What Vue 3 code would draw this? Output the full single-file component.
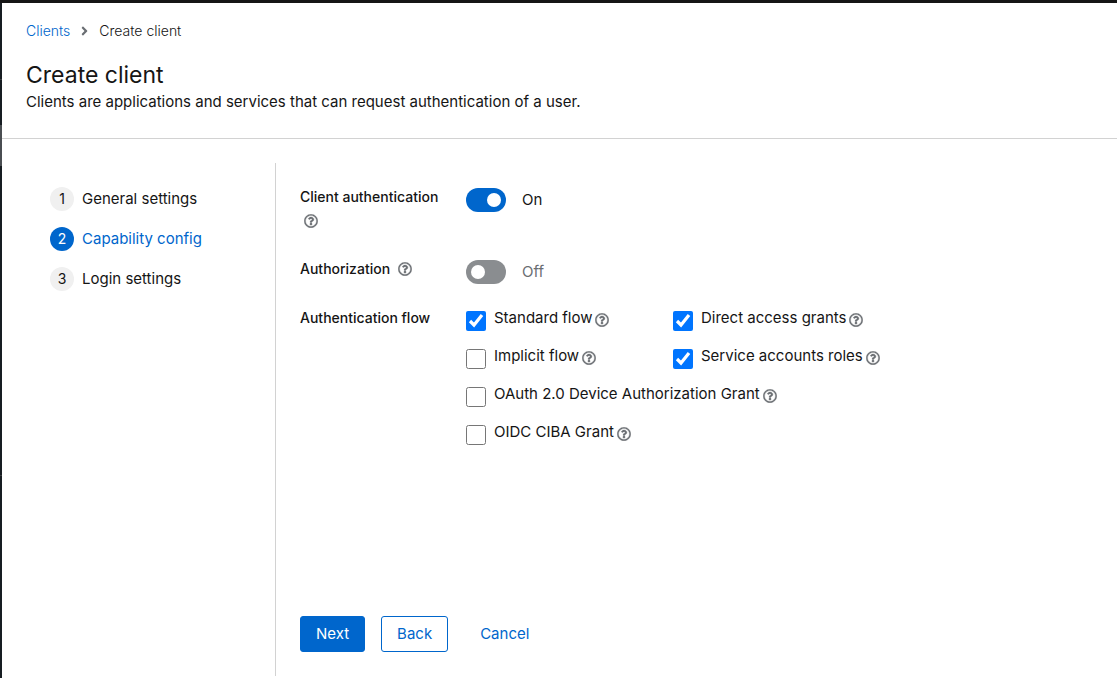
<script setup>
import { ref, h } from 'vue'

const steps = ['General settings', 'Capability config', 'Login settings']
const current = ref(1)
const clientAuth = ref(true)
const authorization = ref(false)
const flows = ref([
  { id: 'standard', label: 'Standard flow', on: true },
  { id: 'direct', label: 'Direct access grants', on: true },
  { id: 'implicit', label: 'Implicit flow', on: false },
  { id: 'service', label: 'Service accounts roles', on: true },
  { id: 'device', label: 'OAuth 2.0 Device Authorization Grant', on: false, wide: true },
  { id: 'ciba', label: 'OIDC CIBA Grant', on: false, wide: true },
])

const helpPath =
  'M256 8C119.043 8 8 119.083 8 256c0 136.997 111.043 248 248 248s248-111.003 248-248C504 119.083 392.957 8 256 8zm0 448c-110.532 0-200-89.431-200-200 0-110.495 89.472-200 200-200 110.491 0 200 89.471 200 200 0 110.53-89.431 200-200 200zm107.244-255.2c0 67.052-72.421 68.084-72.421 92.863V300c0 6.627-5.373 12-12 12h-45.647c-6.627 0-12-5.373-12-12v-8.659c0-35.745 27.1-50.034 47.579-61.516 17.561-9.845 28.324-16.541 28.324-29.579 0-17.246-21.999-28.693-39.784-28.693-23.189 0-33.894 10.977-48.942 29.969-4.057 5.12-11.46 6.071-16.666 2.124l-27.824-21.098c-5.107-3.872-6.251-11.066-2.644-16.363C184.846 131.491 214.94 112 261.794 112c49.071 0 101.45 38.304 101.45 88.8zM298 368c0 23.159-18.841 42-42 42s-42-18.841-42-42 18.841-42 42-42 42 18.841 42 42z'

const HelpIcon = () =>
  h('svg', {
    viewBox: '0 0 512 512',
    width: 14,
    height: 14,
    fill: 'currentColor',
    stroke: 'currentColor',
    'stroke-width': 12,
    'aria-hidden': 'true',
  }, [h('path', { d: helpPath })])
</script>

<template>
  <div class="shell">
    <div class="rail" aria-hidden="true">
      <span class="rail-brand"></span>
      <span class="rail-group"></span>
      <span class="rail-active"></span>
      <span class="rail-list"></span>
      <span class="rail-rest"></span>
    </div>
    <main class="page">
      <header class="head">
        <nav class="crumbs" aria-label="Breadcrumb">
          <a href="#clients">Clients</a>
          <svg viewBox="0 0 256 512" width="7" height="14" fill="#6a6e73" aria-hidden="true">
            <path d="M224.3 273l-136 136c-9.4 9.4-24.6 9.4-33.9 0l-22.6-22.6c-9.4-9.4-9.4-24.6 0-33.9l96.4-96.4-96.4-96.4c-9.4-9.4-9.4-24.6 0-33.9L54.3 103c9.4-9.4 24.6-9.4 33.9 0l136 136c9.5 9.4 9.5 24.6.1 34z" />
          </svg>
          <span>Create client</span>
        </nav>
        <h1>Create client</h1>
        <p>Clients are applications and services that can request authentication of a user.</p>
      </header>

      <div class="wizard">
        <nav class="steps" aria-label="Steps">
          <button
            v-for="(s, i) in steps"
            :key="s"
            type="button"
            class="step"
            :class="{ current: i === current }"
            @click="current = i"
          >
            <span class="num">{{ i + 1 }}</span>
            <span>{{ s }}</span>
          </button>
        </nav>

        <form class="content" @submit.prevent>
          <div class="fields">
            <div class="label">
              <label for="client-auth">Client authentication</label>
              <button type="button" class="help" aria-label="Help for client authentication"><HelpIcon /></button>
            </div>
            <div class="control">
              <input id="client-auth" v-model="clientAuth" class="switch" type="checkbox" role="switch" />
              <span class="state" :class="{ off: !clientAuth }">{{ clientAuth ? 'On' : 'Off' }}</span>
            </div>

            <div class="label">
              <label for="authz">Authorization</label>
              <button type="button" class="help" aria-label="Help for authorization"><HelpIcon /></button>
            </div>
            <div class="control">
              <input id="authz" v-model="authorization" class="switch" type="checkbox" role="switch" />
              <span class="state" :class="{ off: !authorization }">{{ authorization ? 'On' : 'Off' }}</span>
            </div>

            <div id="flow-label" class="label">Authentication flow</div>
            <div class="flows" role="group" aria-labelledby="flow-label">
              <div v-for="f in flows" :key="f.id" class="flow" :class="{ wide: f.wide }">
                <input :id="f.id" v-model="f.on" type="checkbox" />
                <label :for="f.id">{{ f.label }}</label>
                <button type="button" class="help" :aria-label="'Help for ' + f.label"><HelpIcon /></button>
              </div>
            </div>
          </div>

          <footer class="actions">
            <button type="submit" class="btn primary">Next</button>
            <button type="button" class="btn secondary">Back</button>
            <button type="button" class="btn link">Cancel</button>
          </footer>
        </form>
      </div>
    </main>
  </div>
</template>

<style>
body {
  background: #fff;
}
</style>

<style scoped>
.shell {
  box-sizing: border-box;
  display: flex;
  min-height: 100vh;
  border-top: 3px solid #151515;
  color: #151515;
  font: 370 15px/24px Inter, "Noto Sans", sans-serif;
}
.shell *,
.shell *::before {
  box-sizing: border-box;
}
.rail {
  display: flex;
  flex-direction: column;
  flex: 0 0 2px;
  background: #171d22;
}
.rail-brand {
  height: 77px;
  border-bottom: 1px solid #3c3f42;
}
.rail-group {
  height: 45px;
}
.rail-active {
  height: 41px;
  background: #4a4e52;
}
.rail-list {
  height: 310px;
  border-bottom: 1px solid #3c3f42;
}
.rail-rest {
  flex: 1;
}
button {
  font: inherit;
  cursor: pointer;
}
.page {
  flex: 1;
  min-width: 0;
  display: flex;
  flex-direction: column;
}
.head {
  padding: 18px 24px 24px;
  border-bottom: 1px solid #d2d2d2;
}
.crumbs {
  display: flex;
  align-items: center;
  gap: 11px;
  height: 20px;
  font-size: 14px;
  font-weight: 300;
}
a {
  color: #06c;
  text-decoration: none;
}
h1 {
  margin: 19px 0 0;
  font-size: 23px;
  line-height: 30px;
  font-weight: 400;
}
p {
  margin: 0;
}
.wizard {
  flex: 1;
  display: flex;
  padding: 24px 0 2px;
}
.steps {
  flex: 0 0 274px;
  display: flex;
  flex-direction: column;
  gap: 16px;
  padding: 24px 24px 0 48px;
  border-right: 1px solid #d2d2d2;
}
.step {
  display: flex;
  gap: 8px;
  padding: 0;
  border: 0;
  background: none;
  color: #151515;
  text-align: left;
}
.num {
  width: 24px;
  height: 24px;
  border-radius: 50%;
  background: #f0f0f0;
  font-size: 14px;
  text-align: center;
}
.step.current {
  color: #06c;
}
.current .num {
  background: #06c;
  color: #fff;
}
.content {
  flex: 1;
  min-width: 0;
  display: flex;
  flex-direction: column;
  justify-content: space-between;
  padding: 24px;
}
.fields {
  display: grid;
  grid-template-columns: 150px 1fr;
  gap: 24px 16px;
}
.label {
  display: flex;
  flex-wrap: wrap;
  align-content: flex-start;
  gap: 4px;
  padding-bottom: 4px;
  font-size: 14px;
  font-weight: 550;
  line-height: 20px;
}
.help {
  display: inline-flex;
  align-items: center;
  padding: 0;
  border: 0;
  background: none;
  color: #6a6e73;
}
.label .help {
  height: 20px;
  margin-left: 4px;
}
.control {
  display: flex;
  align-items: flex-start;
  gap: 16px;
  padding-top: 1px;
}
.switch {
  appearance: none;
  width: 40px;
  height: 24px;
  margin: 0;
  padding: 5px;
  border-radius: 12px;
  background: #8a8d90;
}
.switch::before {
  content: "";
  display: block;
  width: 14px;
  height: 14px;
  border-radius: 50%;
  background: #fff;
}
.switch:checked {
  background: #06c;
}
.switch:checked::before {
  margin-left: 16px;
}
.off {
  color: #6a6e73;
}
.flows {
  display: grid;
  grid-template-columns: 199px 1fr;
  gap: 14px 8px;
  justify-content: start;
}
.flow {
  display: flex;
  align-items: flex-start;
  height: 24px;
  line-height: 20px;
}
.flow.wide {
  grid-column: 1 / -1;
}
.flow input {
  width: 20px;
  height: 20px;
  margin: 3px 8px 0 0;
}
.flow .help {
  margin: 5px 0 0 3px;
}
.actions {
  display: flex;
  gap: 16px;
}
.btn {
  height: 36px;
  padding: 0 15px;
  border: 1px solid #06c;
  border-radius: 3px;
  background: #fff;
  color: #06c;
}
.btn.primary {
  background: #06c;
  color: #fff;
}
.btn.link {
  border-color: transparent;
  background: none;
}
</style>
